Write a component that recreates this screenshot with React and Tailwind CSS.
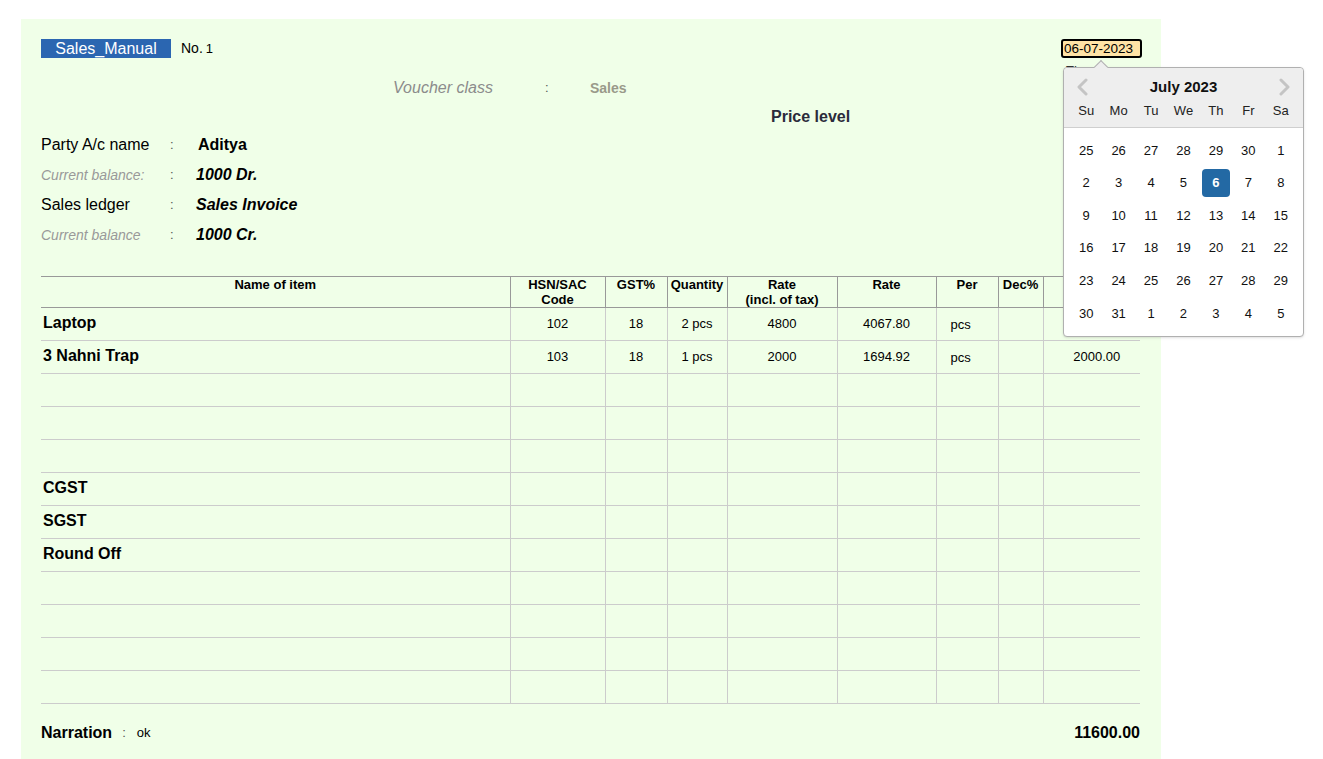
import { useState } from 'react';

const columns = [
  { key: 'name', label: ['Name of item'], width: 'w-[469px]' },
  { key: 'hsn', label: ['HSN/SAC', 'Code'], width: 'w-[95px]' },
  { key: 'gst', label: ['GST%'], width: 'w-[62px]' },
  { key: 'qty', label: ['Quantity'], width: 'w-[60px]' },
  { key: 'rateIncl', label: ['Rate', '(incl. of tax)'], width: 'w-[110px]' },
  { key: 'rate', label: ['Rate'], width: 'w-[99px]' },
  { key: 'per', label: ['Per'], width: 'w-[62px]' },
  { key: 'dec', label: ['Dec%'], width: 'w-[45px]' },
  { key: 'amount', label: ['Amount'], width: 'w-[97px]' },
];

const rows = [
  { name: 'Laptop', hsn: '102', gst: '18', qty: '2 pcs', rateIncl: '4800', rate: '4067.80', per: 'pcs', dec: '', amount: '4800.00' },
  { name: '3 Nahni Trap', hsn: '103', gst: '18', qty: '1 pcs', rateIncl: '2000', rate: '1694.92', per: 'pcs', dec: '', amount: '2000.00' },
  {},
  {},
  {},
  { name: 'CGST' },
  { name: 'SGST' },
  { name: 'Round Off' },
  {},
  {},
  {},
  {},
];

const weeks = [
  [25, 26, 27, 28, 29, 30, 1],
  [2, 3, 4, 5, 6, 7, 8],
  [9, 10, 11, 12, 13, 14, 15],
  [16, 17, 18, 19, 20, 21, 22],
  [23, 24, 25, 26, 27, 28, 29],
  [30, 31, 1, 2, 3, 4, 5],
];

const Chevron = ({ dir }) => (
  <svg width="12" height="18" viewBox="0 0 12 18" fill="none">
    <path
      d={dir === 'left' ? 'M10 2 L3 9 L10 16' : 'M2 2 L9 9 L2 16'}
      stroke="#c4c4c4"
      strokeWidth="3"
      strokeLinecap="round"
      strokeLinejoin="round"
    />
  </svg>
);

const DatePicker = () => {
  const [selected, setSelected] = useState(6);

  return (
    <div className="absolute left-[2px] top-[28px] z-10 w-[241px] rounded-[4px] border border-[#b0b0b0] bg-white shadow-sm">
      <div className="absolute -top-[6px] left-[32px] h-[10px] w-[10px] rotate-45 border-l border-t border-[#b0b0b0] bg-[#eeeeee]" />
      <div className="relative rounded-t-[4px] border-b border-[#cfcfcf] bg-[#eeeeee] px-[6px] pb-[9px] pt-[2px]">
        <div className="flex h-[34px] items-center justify-between px-[6px]">
          <Chevron dir="left" />
          <span className="text-[15px] font-bold text-[#111]">July 2023</span>
          <Chevron dir="right" />
        </div>
        <div className="grid grid-cols-7 text-center text-[13px] leading-[14px] text-[#222]">
          {['Su', 'Mo', 'Tu', 'We', 'Th', 'Fr', 'Sa'].map((d) => (
            <span key={d}>{d}</span>
          ))}
        </div>
      </div>
      <div className="grid grid-cols-7 px-[6px] pb-[6px] pt-[6px] text-[13px] text-[#111]">
        {weeks.map((week, wi) =>
          week.map((day, di) => {
            const isCurrent = !((wi === 0 && day > 7) || (wi === 5 && day < 7));
            const isSelected = isCurrent && day === selected;
            return (
              <div key={`${wi}-${di}`} className="flex h-[32.6px] items-center justify-center">
                <button
                  onClick={() => isCurrent && setSelected(day)}
                  className={
                    isSelected
                      ? 'flex h-[28px] w-[28px] items-center justify-center rounded-[4px] bg-[#2369a4] font-bold text-white'
                      : 'flex h-[28px] w-[28px] items-center justify-center'
                  }
                >
                  {day}
                </button>
              </div>
            );
          })
        )}
      </div>
    </div>
  );
};

const App = () => {
  return (
    <div className="min-h-screen bg-white pl-[21px] pt-[19px] font-['Liberation_Sans',Arial,sans-serif] text-black">
      <div className="h-[740px] w-[1140px] bg-[#f0ffe8] px-[20px] pt-[20px]">
        {/* top bar */}
        <div className="flex h-[19px] items-center">
          <div className="flex h-[19px] w-[130px] items-center justify-center bg-[#2b66b1] text-[16px] text-white">
            Sales_Manual
          </div>
          <span className="ml-[10px] text-[14px]">
            No.<span className="ml-[3px] text-[13px]">1</span>
          </span>
          <div className="relative ml-auto mr-[-1px]">
            <div className="flex h-[19px] w-[81px] items-center rounded-[3px] border-2 border-black bg-[#ffe3a6] pl-[1px] text-[13.5px] leading-none">
              06-07-2023
            </div>
            <div className="absolute left-[5px] top-[22px] text-[13px] text-[#333]">Thursday</div>
            <DatePicker />
          </div>
        </div>

        {/* voucher class */}
        <div className="mt-[20px] flex h-[20px] items-center pl-[352px]">
          <span className="w-[152px] text-[16px] italic text-[#8c8c8c]">Voucher class</span>
          <span className="w-[45px] text-[13px] text-[#555]">:</span>
          <span className="text-[14px] font-bold text-[#9a9a8a]">Sales</span>
        </div>

        {/* price level */}
        <div className="mt-[9px] flex h-[20px] items-center pl-[730px]">
          <span className="text-[16px] font-bold text-[#2b2b3b]">Price level</span>
        </div>

        {/* party details */}
        <div className="mt-[3px] flex flex-col">
          <div className="flex h-[30px] items-center">
            <span className="w-[129px] text-[16px]">Party A/c name</span>
            <span className="w-[28px] text-[13px] text-[#555]">:</span>
            <span className="text-[16px] font-bold">Aditya</span>
          </div>
          <div className="flex h-[30px] items-center">
            <span className="w-[129px] text-[14px] italic text-[#999]">Current balance:</span>
            <span className="w-[26px] text-[13px] text-[#555]">:</span>
            <span className="text-[16px] font-bold italic">1000 Dr.</span>
          </div>
          <div className="flex h-[30px] items-center">
            <span className="w-[129px] text-[16px]">Sales ledger</span>
            <span className="w-[26px] text-[13px] text-[#555]">:</span>
            <span className="text-[16px] font-bold italic">Sales Invoice</span>
          </div>
          <div className="flex h-[30px] items-center">
            <span className="w-[129px] text-[14px] italic text-[#999]">Current balance</span>
            <span className="w-[26px] text-[13px] text-[#555]">:</span>
            <span className="text-[16px] font-bold italic">1000 Cr.</span>
          </div>
        </div>

        {/* items table */}
        <table className="mt-[26px] w-[1099px] table-fixed border-collapse">
          <thead>
            <tr className="h-[30px] border-y border-[#999999]">
              {columns.map((col, i) => (
                <th
                  key={col.key}
                  className={`${col.width} align-top pt-0 text-center text-[13px] font-bold leading-[15px] ${
                    i < columns.length - 1 ? 'border-r border-[#999999]' : ''
                  }`}
                >
                  {col.label.map((line) => (
                    <div key={line}>{line}</div>
                  ))}
                </th>
              ))}
            </tr>
          </thead>
          <tbody>
            {rows.map((row, ri) => (
              <tr key={ri} className="h-[33px] border-b border-[#cccccc]">
                {columns.map((col, i) => {
                  const value = row[col.key] ?? '';
                  let cls = 'text-center text-[13px]';
                  if (col.key === 'name') cls = 'pb-[2px] pl-[2px] text-left text-[16px] font-bold';
                  if (col.key === 'per') cls = 'pl-[14px] pt-[2px] text-left text-[13px]';
                  if (col.key === 'amount') cls = 'pl-[10px] text-center text-[13px]';
                  return (
                    <td
                      key={col.key}
                      className={`${cls} ${i < columns.length - 1 ? 'border-r border-[#cccccc]' : ''}`}
                    >
                      {value}
                    </td>
                  );
                })}
              </tr>
            ))}
          </tbody>
        </table>

        {/* narration */}
        <div className="mt-[19px] flex h-[20px] w-[1099px] items-center">
          <span className="text-[16px] font-bold">Narration</span>
          <span className="ml-[10px] text-[13px] text-[#555]">:</span>
          <span className="ml-[11px] text-[13px]">ok</span>
          <span className="ml-auto text-[16px] font-bold">11600.00</span>
        </div>
      </div>
    </div>
  );
};

export default App;
